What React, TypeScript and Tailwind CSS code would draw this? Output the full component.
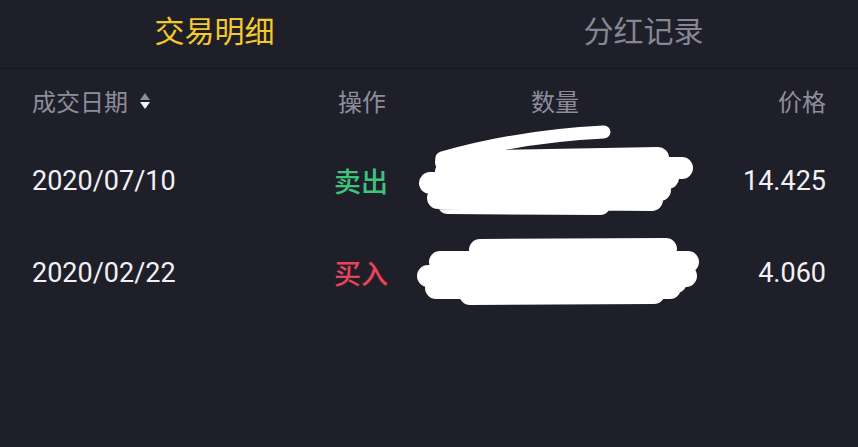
import { ReactNode } from "react";

const cjk = { fontFamily: '"Noto Sans CJK SC", "Noto Sans", sans-serif' };
const num = { fontFamily: 'Roboto, "Noto Sans CJK SC", sans-serif' };

const trades = [
  { date: "2020/07/10", action: "卖出", side: "sell", price: "14.425" },
  { date: "2020/02/22", action: "买入", side: "buy", price: "4.060" },
];

function Row({ children, className = "" }: { children: ReactNode; className?: string }) {
  return <div className={`flex items-center px-8 ${className}`}>{children}</div>;
}

function SortIcon() {
  return (
    <svg width="12" height="18" viewBox="0 0 12 18" className="ml-[11px]">
      <path d="M6 1 L11 8 L1 8 Z" fill="#8d8d9b" />
      <path d="M1 10 L11 10 L6 17 Z" fill="#f2f2f4" />
    </svg>
  );
}

// redaction scribbles over the quantity column
function Scribbles() {
  return (
    <svg
      className="pointer-events-none absolute left-0 top-0"
      width="858"
      height="447"
      viewBox="0 0 858 447"
      fill="none"
      stroke="#ffffff"
      strokeLinecap="round"
      strokeLinejoin="round"
    >
      <path d="M442 158 Q520 136 604 132" strokeWidth="13" />
      <path
        d="M446 162 L658 158 M430 183 L668 178 M650 168 L682 168 M438 198 L652 200 M448 203 L600 204 M446 172 L656 170 M440 190 L660 190"
        strokeWidth="22"
      />
      <path
        d="M480 250 L666 249 M440 262 L688 262 M428 276 L686 276 M436 288 L670 288 M470 294 L654 293 M450 269 L680 269 M444 282 L676 282"
        strokeWidth="22"
      />
    </svg>
  );
}

export default function App() {
  return (
    <div className="relative h-[447px] w-[858px] overflow-hidden bg-[#1f1f29]" style={cjk}>
      <div className="flex h-[69px] border-b border-[#17171f]">
        <div className="flex flex-1 items-center justify-center pb-[10px] text-[30px] text-[#f3c92c]">交易明细</div>
        <div className="flex flex-1 items-center justify-center pb-[10px] text-[30px] text-[#868694]">分红记录</div>
      </div>

      <Row className="h-[64px] text-[24px] text-[#8d8d9b]">
        <div className="flex w-[280px] items-center">
          成交日期
          <SortIcon />
        </div>
        <div className="w-[98px] pl-[2px] text-center">操作</div>
        <div className="w-[290px] text-center">数量</div>
        <div className="flex-1 text-right">价格</div>
      </Row>

      {trades.map((t) => (
        <Row key={t.date} className="h-[92px] pt-[4px] text-[#f1f1f4]">
          <div className="w-[280px] text-[27px]" style={num}>
            {t.date}
          </div>
          <div
            className={`w-[98px] text-center text-[27px] font-medium ${
              t.side === "sell" ? "text-[#3ec37c]" : "text-[#e8435a]"
            }`}
          >
            {t.action}
          </div>
          <div className="w-[290px]" />
          <div className="flex-1 text-right text-[27px]" style={num}>
            {t.price}
          </div>
        </Row>
      ))}

      <Scribbles />
    </div>
  );
}
